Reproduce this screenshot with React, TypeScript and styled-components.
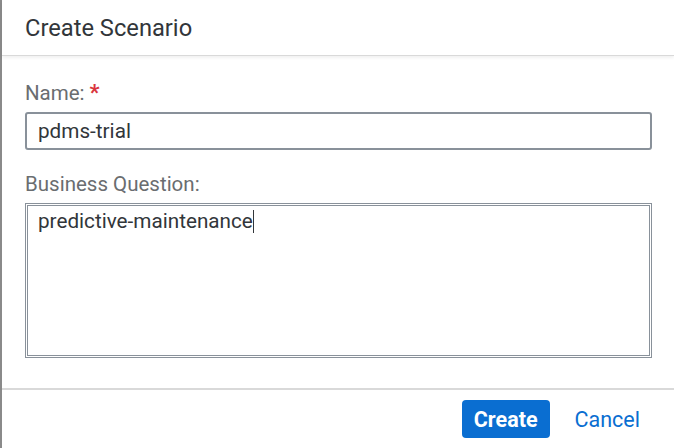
import React from "react";
import styled, { createGlobalStyle } from "styled-components";

const Global = createGlobalStyle`
  html, body { margin: 0; padding: 0; background: #fff; }
  body { font-family: Roboto, "Noto Sans", "Liberation Sans", Arial, sans-serif; }
  * { box-sizing: border-box; }
`;

const Dialog = styled.div`
  width: 674px;
  height: 448px;
  display: flex;
  flex-direction: column;
  background: #fff;
  border-left: 2px solid #8a8a8a;
`;

const Header = styled.header`
  height: 56px;
  flex-shrink: 0;
  display: flex;
  align-items: center;
  padding: 0 23px;
  border-bottom: 1px solid #d9d9d9;
  box-shadow: 0 2px 3px rgba(0, 0, 0, 0.06);
  font-size: 23.7px;
  color: #32363a;
`;

const Body = styled.div`
  flex: 1;
  display: flex;
  flex-direction: column;
  padding: 26px 23px 0 23px;
`;

const Label = styled.label`
  font-size: 20.5px;
  color: #6a6d70;
  display: flex;
  align-items: center;
  height: 22px;
  margin-bottom: 8px;
`;

const Required = styled.span`
  color: #d9363e;
  font-weight: bold;
  margin-left: 5px;
  font-size: 22px;
  line-height: 1;
`;

const Input = styled.div`
  width: 627px;
  height: 38px;
  border: 2px solid #89919a;
  border-radius: 3px;
  padding: 0 11px;
  display: flex;
  align-items: center;
  font-size: 20.7px;
  color: #32363a;
  margin-bottom: 23px;
`;

const TextArea = styled.div`
  width: 627px;
  height: 155px;
  border: 3px double #89919a;
  padding: 3px 10px;
  font-size: 20.7px;
  line-height: 24px;
  color: #32363a;
`;

const Caret = styled.span`
  display: inline-block;
  width: 1px;
  height: 23px;
  background: #32363a;
  vertical-align: -5px;
`;

const Footer = styled.footer`
  height: 60px;
  flex-shrink: 0;
  border-top: 2px solid #d9d9d9;
  display: flex;
  align-items: center;
  justify-content: flex-end;
  padding: 0 22px 0 0;
  gap: 13px;
`;

const Button = styled.button<{ $primary?: boolean }>`
  font-family: inherit;
  font-size: 21.5px;
  height: 38px;
  padding: 0 12px;
  border-radius: 4px;
  border: none;
  font-weight: ${(p) => (p.$primary ? 700 : 400)};
  color: ${(p) => (p.$primary ? "#fff" : "#0a6ed1")};
  background: ${(p) => (p.$primary ? "#0a6ed1" : "transparent")};
`;

export default function App() {
  return (
    <>
      <Global />
      <Dialog>
        <Header>Create Scenario</Header>
        <Body>
          <Label>
            Name:<Required>*</Required>
          </Label>
          <Input>pdms-trial</Input>
          <Label>Business Question:</Label>
          <TextArea>
            predictive-maintenance<Caret />
          </TextArea>
        </Body>
        <Footer>
          <Button $primary>Create</Button>
          <Button>Cancel</Button>
        </Footer>
      </Dialog>
    </>
  );
}
